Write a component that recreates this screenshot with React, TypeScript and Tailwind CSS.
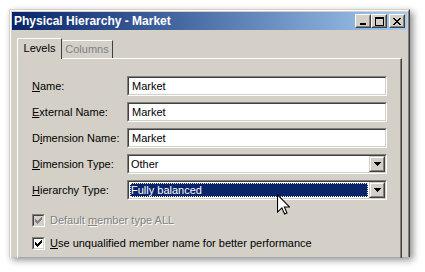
import type { ReactNode } from "react";

const font = "font-['Liberation_Sans',Arial,sans-serif]";

function Sunken({ children, className = "", bg = "bg-white" }: { children?: ReactNode; className?: string; bg?: string }) {
  return (
    <div className={`border border-t-[#808080] border-l-[#808080] border-r-white border-b-white ${className}`}>
      <div className={`h-full w-full border border-t-[#404040] border-l-[#404040] border-r-[#d4d0c8] border-b-[#d4d0c8] ${bg}`}>
        {children}
      </div>
    </div>
  );
}

function Raised({ children, className = "" }: { children?: ReactNode; className?: string }) {
  return (
    <div className={`border border-t-[#d4d0c8] border-l-[#d4d0c8] border-r-[#404040] border-b-[#404040] bg-[#d4d0c8] ${className}`}>
      <div className="flex h-full w-full items-center justify-center border border-t-white border-l-white border-r-[#808080] border-b-[#808080]">
        {children}
      </div>
    </div>
  );
}

function CaptionButton({ children, className = "" }: { children: ReactNode; className?: string }) {
  return (
    <div className={`h-[14px] w-[16px] border border-t-white border-l-white border-r-[#404040] border-b-[#404040] bg-[#d4d0c8] ${className}`}>
      <div className="flex h-full w-full items-center justify-center border border-t-[#d4d0c8] border-l-[#d4d0c8] border-r-[#808080] border-b-[#808080]">
        {children}
      </div>
    </div>
  );
}

const closePixels = [
  [0, 1, 6, 7],
  [1, 2, 5, 6],
  [2, 3, 4, 5],
  [3, 4],
  [2, 3, 4, 5],
  [1, 2, 5, 6],
  [0, 1, 6, 7],
];

function Arrow() {
  return (
    <svg width="7" height="4" viewBox="0 0 7 4" shapeRendering="crispEdges">
      <rect x="0" y="0" width="7" height="1" fill="#000" />
      <rect x="1" y="1" width="5" height="1" fill="#000" />
      <rect x="2" y="2" width="3" height="1" fill="#000" />
      <rect x="3" y="3" width="1" height="1" fill="#000" />
    </svg>
  );
}

function Check({ color }: { color: string }) {
  const rows = [[6], [5, 6], [0, 4, 5, 6], [0, 1, 3, 4, 5], [0, 1, 2, 3, 4], [1, 2, 3], [2]];
  return (
    <svg width="7" height="7" viewBox="0 0 7 7" shapeRendering="crispEdges">
      {rows.map((r, y) => r.map((x) => <rect key={`${x}-${y}`} x={x} y={y} width="1" height="1" fill={color} />))}
    </svg>
  );
}

function Field({ label, value }: { label: ReactNode; value: string }) {
  return (
    <div className="flex h-[20px] items-center">
      <div className="w-[95px] text-[11px] text-black">{label}</div>
      <Sunken className="h-[20px] flex-1">
        <div className="flex h-full items-center pl-[3px] text-[11px] text-black">{value}</div>
      </Sunken>
    </div>
  );
}

function Combo({ label, value, selected = false }: { label: ReactNode; value: string; selected?: boolean }) {
  return (
    <div className="flex h-[20px] items-center">
      <div className="w-[95px] text-[11px] text-black">{label}</div>
      <Sunken className="h-[20px] flex-1">
        <div className="flex h-full items-stretch">
          <div className="flex flex-1 p-[1px]">
            {selected ? (
              <div className="flex flex-1 items-center border border-dotted border-[#f0f0c0] bg-[#0a246a] pl-[0px] text-[11px] text-white">
                {value}
              </div>
            ) : (
              <div className="flex flex-1 items-center pl-[1px] text-[11px] text-black">{value}</div>
            )}
          </div>
          <Raised className="h-[16px] w-[16px]">
            <Arrow />
          </Raised>
        </div>
      </Sunken>
    </div>
  );
}

export default function App() {
  return (
    <div className={`relative h-[272px] w-[425px] overflow-hidden bg-white ${font}`}>
      <div className="ml-[9px] mt-[9px] h-[248px] w-[401px] border-x border-t border-t-[#d4d0c8] border-l-[#d4d0c8] border-r-[#404040] bg-[#d4d0c8] shadow-[3px_3px_7px_rgba(0,0,0,0.45)]">
        <div className="h-full w-full border-x border-t border-t-white border-l-white border-r-[#808080] px-[1px] pt-[1px]">
          {/* title bar */}
          <div className="flex h-[18px] items-center bg-gradient-to-r from-[#0a246a] to-[#a6caf0] pl-[2px] pr-[2px]">
            <span className="flex-1 text-[12px] font-bold leading-none text-white">Physical Hierarchy - Market</span>
            <CaptionButton>
              <svg width="8" height="8" viewBox="0 0 8 8" shapeRendering="crispEdges">
                <rect x="1" y="6" width="6" height="2" fill="#000" />
              </svg>
            </CaptionButton>
            <CaptionButton>
              <svg width="9" height="9" viewBox="0 0 9 9" shapeRendering="crispEdges">
                <rect x="0" y="0" width="9" height="2" fill="#000" />
                <rect x="0" y="0" width="1" height="9" fill="#000" />
                <rect x="8" y="0" width="1" height="9" fill="#000" />
                <rect x="0" y="8" width="9" height="1" fill="#000" />
              </svg>
            </CaptionButton>
            <CaptionButton className="ml-[2px]">
              <svg width="8" height="7" viewBox="0 0 8 7" shapeRendering="crispEdges">
                {closePixels.map((r, y) => r.map((x) => <rect key={`${x}-${y}`} x={x} y={y} width="1" height="1" fill="#000" />))}
              </svg>
            </CaptionButton>
          </div>

          {/* tabs */}
          <div className="mx-[5px] mt-[8px] flex h-[20px] items-end">
            <div className="relative z-10 -mb-[1px] flex h-[21px] w-[45px] items-center justify-center rounded-tl-[2px] border-l border-t border-r border-l-white border-t-white border-r-[#404040] bg-[#d4d0c8] pb-[1px] text-[11px] text-black">
              Levels
            </div>
            <div className="flex h-[18px] w-[51px] items-center justify-center rounded-tl-[2px] border-t border-r border-t-white border-r-[#404040] text-[11px] text-[#808080]">
              Columns
            </div>
          </div>

          {/* panel */}
          <div className="mx-[5px] h-[200px] border-l border-t border-r border-l-white border-t-white border-r-[#404040]">
            <div className="h-full border-r border-r-[#808080] pl-[14px] pr-[13px] pt-[17px]">
              <div className="flex flex-col gap-[6px]">
                <Field label={<><span className="underline">N</span>ame:</>} value="Market" />
                <Field label={<><span className="underline">E</span>xternal Name:</>} value="Market" />
                <Field label={<>D<span className="underline">i</span>mension Name:</>} value="Market" />
                <Combo label={<><span className="underline">D</span>imension Type:</>} value="Other" />
                <Combo label={<><span className="underline">H</span>ierarchy Type:</>} value="Fully balanced" selected />
              </div>

              <div className="mt-[14px] flex flex-col gap-[10px]">
                <div className="flex h-[13px] items-center">
                  <Sunken className="h-[13px] w-[13px]" bg="bg-[#d4d0c8]">
                    <div className="flex h-full items-center justify-center">
                      <Check color="#808080" />
                    </div>
                  </Sunken>
                  <span className="ml-[5px] text-[11px] text-[#808080] [text-shadow:1px_1px_0_#ffffff]">
                    Default <span className="underline">m</span>ember type ALL
                  </span>
                </div>
                <div className="flex h-[13px] items-center">
                  <Sunken className="h-[13px] w-[13px]">
                    <div className="flex h-full items-center justify-center">
                      <Check color="#000" />
                    </div>
                  </Sunken>
                  <span className="ml-[5px] text-[11px] text-black">
                    <span className="underline">U</span>se unqualified member name for better performance
                  </span>
                </div>
              </div>
            </div>
          </div>
        </div>
      </div>

      {/* mouse pointer */}
      <svg className="absolute left-[277px] top-[194px]" width="13" height="21" viewBox="0 0 12 19">
        <path d="M0.5 0.5 V16.5 L4.5 12.7 L7 18.3 L9.2 17.3 L6.8 11.8 H11.5 Z" fill="#fff" stroke="#000" strokeWidth="1" strokeLinejoin="miter" />
      </svg>
    </div>
  );
}
